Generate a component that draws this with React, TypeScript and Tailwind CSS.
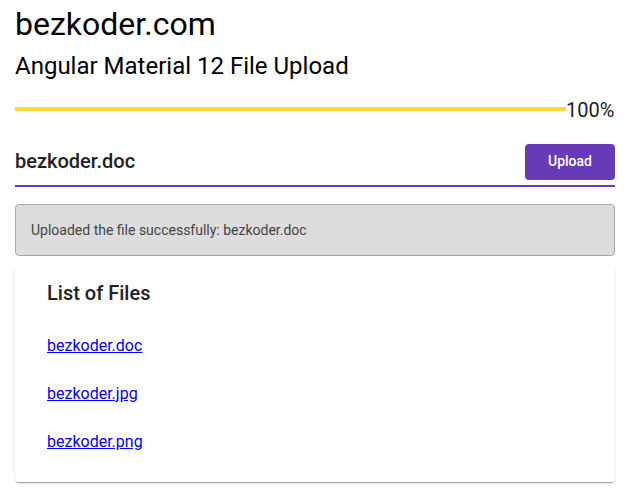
export default function App() {
  const files = ['bezkoder.doc', 'bezkoder.jpg', 'bezkoder.png']

  return (
    <div className="w-[630px] h-[500px] bg-white px-[15px] pt-[4px] text-[#000000]" style={{ fontFamily: 'Roboto, "Helvetica Neue", sans-serif' }}>
      <h1 className="text-[32px] leading-[40px] font-normal">bezkoder.com</h1>
      <h2 className="mt-[6px] text-[24px] leading-[32px] font-normal">Angular Material 12 File Upload</h2>

      {/* Progress */}
      <div className="mt-[16px] flex items-center">
        <div className="h-[4px] w-[551px] bg-[#fdd835]" />
        <span className="text-[20px] leading-[20px] text-[#212121] mt-[2px]">100%</span>
      </div>

      {/* File field + upload */}
      <div className="mt-[12px] relative h-[55px] border-b-2 border-[#673ab7] flex items-center justify-between">
        <span className="text-[20px] font-medium text-[#212121] pt-[5px]">bezkoder.doc</span>
        <button className="mt-[6px] h-[36px] w-[90px] rounded-[4px] bg-[#673ab7] text-white text-[14px] font-medium">
          Upload
        </button>
      </div>

      {/* Message */}
      <div className="mt-[17px] h-[52px] rounded-[4px] border border-[#a8a8a8] bg-[#dddddd] flex items-center px-[15px]">
        <span className="text-[14px] text-[#444444]">Uploaded the file successfully: bezkoder.doc</span>
      </div>

      {/* Files card */}
      <div className="mt-[10px] h-[216px] rounded-[4px] bg-white shadow-[0_2px_1px_-1px_rgba(0,0,0,0.2),0_1px_1px_0_rgba(0,0,0,0.14),0_1px_3px_0_rgba(0,0,0,0.12)] px-[32px] pt-[11px]">
        <div className="text-[20px] leading-[32px] font-medium text-[#212121]">List of Files</div>
        <ul className="mt-[13px] flex flex-col">
          {files.map((f) => (
            <li key={f} className="h-[48px] flex items-center">
              <a href="#" className="text-[16px] text-[#0000ee] underline">{f}</a>
            </li>
          ))}
        </ul>
      </div>
    </div>
  )
}
